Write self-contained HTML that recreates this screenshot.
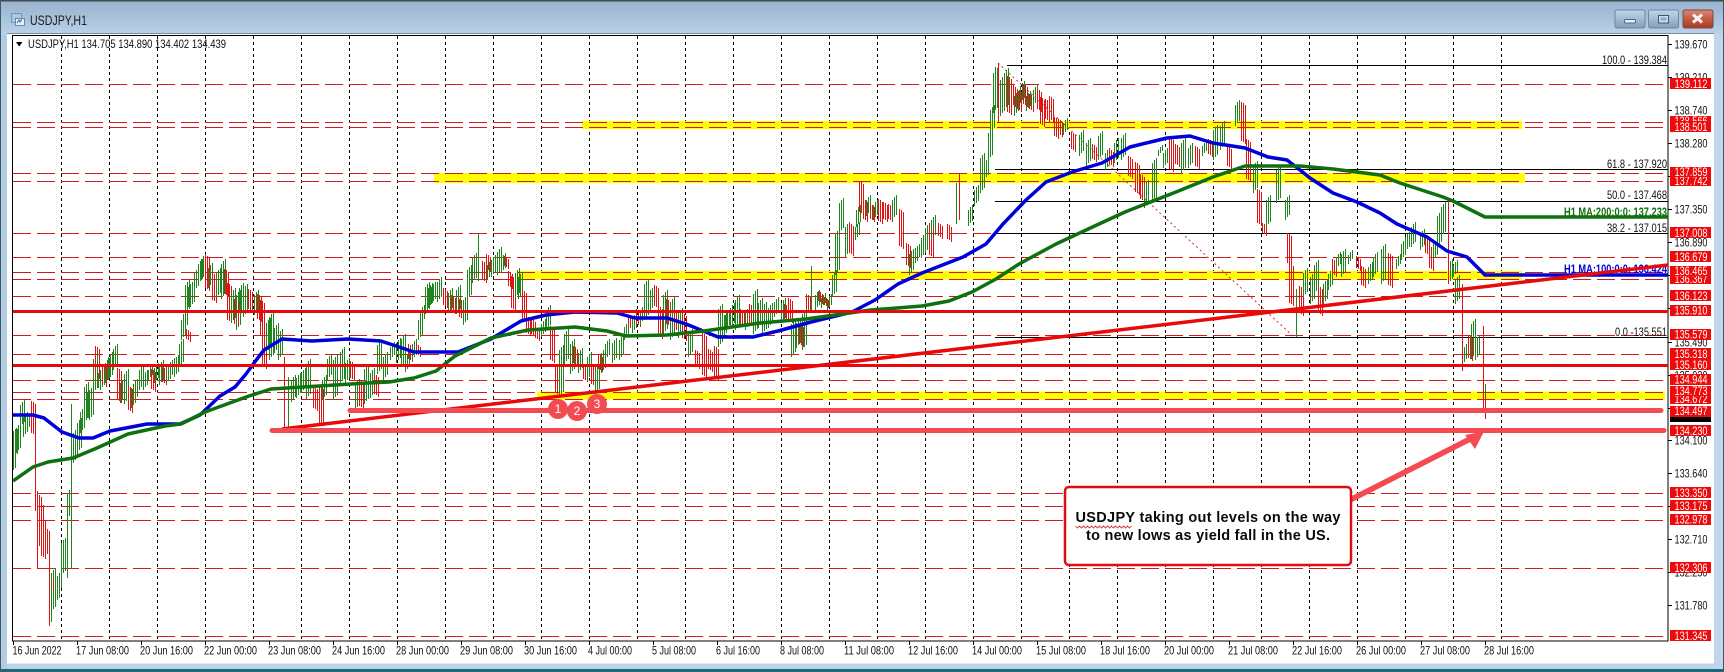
<!DOCTYPE html>
<html><head><meta charset="utf-8"><title>USDJPY,H1</title>
<style>
html,body{margin:0;padding:0;background:#bcd3e9;width:1724px;height:672px;overflow:hidden}
svg{display:block}
text{font-family:"Liberation Sans",sans-serif}
.a{font-size:12px;fill:#111}
.w{font-size:12px;fill:#fff}
.d{font-size:12px;fill:#111}
.f{font-size:12px;fill:#111}
</style></head><body>
<svg width="1724" height="672" viewBox="0 0 1724 672" xmlns="http://www.w3.org/2000/svg">
<defs>
<linearGradient id="tb" x1="0" y1="0" x2="0" y2="1"><stop offset="0" stop-color="#97b0cc"/><stop offset="1" stop-color="#bad2e9"/></linearGradient>
<linearGradient id="btn" x1="0" y1="0" x2="0" y2="1"><stop offset="0" stop-color="#c3d4e6"/><stop offset=".5" stop-color="#a3bbd4"/><stop offset="1" stop-color="#7f9dbd"/></linearGradient>
<linearGradient id="cls" x1="0" y1="0" x2="0" y2="1"><stop offset="0" stop-color="#d98a76"/><stop offset=".5" stop-color="#c55a42"/><stop offset="1" stop-color="#a83a28"/></linearGradient>
<clipPath id="ch"><rect x="13" y="36" width="1655" height="605"/></clipPath>
<path id="gb" stroke="#1e841e" fill="none" d="M13 431v39M15 431v25M18 425v25M22 402v22M25 414v20M29 415v12M53 570v39M57 585v15M59 573v17M63 540v33M65 540v24M69 490v26M75 430v30M79 420v30M82 409v21M86 384v36M89 390v25M91 392v25M95 356v34M100 370v15M102 376v11M107 360v20M110 354v23M115 346v21M122 380v20M126 371v30M133 385v20M135 381v18M141 367v20M145 372v15M150 367v10M156 365v15M161 362v20M168 364v17M172 360v15M176 357v17M181 341v23M183 317v20M185 311v16M187 282v29M190 284v20M192 284v20M196 270v18M200 261v20M203 256v21M210 265v20M218 270v25M223 261v35M233 290v30M238 292v35M241 285v25M245 286v28M256 292v20M268 320v30M271 314v43M276 325v25M280 331v26M293 377v22M298 375v20M303 370v20M308 361v35M324 377v20M329 356v21M335 357v40M342 349v32M347 360v20M357 381v26M366 366v35M372 370v25M379 342v29M385 354v23M392 344v13M398 340v20M403 336v28M407 354v15M414 341v16M420 317v20M422 307v14M427 284v27M430 285v20M433 284v17M439 279v20M450 290v20M458 287v24M465 297v25M469 267v30M474 255v25M489 262v15M493 257v17M499 249v23M503 255v15M517 270v25M520 274v22M543 321v13M548 307v20M561 347v47M566 331v30M572 341v30M580 350v20M589 354v23M597 367v24M603 350v20M607 341v16M614 340v20M621 337v20M626 324v13M634 315v15M642 307v14M646 281v36M650 290v20M665 292v39M672 299v38M680 310v25M690 331v23M720 306v38M724 315v20M727 312v15M732 305v20M737 297v30M747 309v18M755 291v40M760 300v25M764 304v27M770 305v20M776 299v15M783 300v20M793 321v33M798 320v25M804 311v36M817 292v15M823 295v10M829 296v11M834 272v22M837 231v41M841 200v30M847 224v30M857 224v13M858 207v17M868 197v16M875 202v15M894 197v20M911 251v21M915 248v15M919 244v13M923 235v20M927 225v25M933 217v20M970 207v16M976 187v16M982 155v35M986 160v17M990 130v27M992 107v23M995 70v40M1002 77v36M1006 70v37M1016 93v20M1022 83v17M1028 93v15M1035 87v16M1065 120v12M1081 132v21M1088 140v23M1100 133v24M1107 150v17M1116 140v20M1123 135v22M1146 182v23M1154 160v40M1160 147v6M1165 150v15M1183 140v30M1190 145v20M1204 143v10M1215 127v30M1222 123v24M1237 102v21M1255 163v27M1268 197v27M1278 167v33M1287 197v20M1305 270v24M1312 274v27M1316 262v29M1325 281v20M1330 271v16M1338 254v12M1343 251v23M1350 252v9M1370 264v17M1375 254v20M1383 246v35M1398 256v10M1403 241v16M1407 234v15M1413 224v20M1422 231v16M1435 241v16M1439 213v31M1443 204v30M1450 261v20M1455 262v12M1457 277v24M1466 344v15M1473 321v35M1477 337v20"/>
<path id="rb" stroke="#e01212" fill="none" d="M39 495v40M41 503v44M43 519v38M45 529v23M47 529v23M55 580v12M33 402v32M97 347v30M104 365v20M119 369v32M130 387v24M153 370v20M164 368v15M188 330v10M207 256v33M214 274v27M226 270v25M229 284v37M236 300v25M250 290v20M259 295v25M262 301v36M264 337v30M315 387v22M321 387v37M352 362v17M361 381v26M376 375v20M410 345v15M418 345v10M445 289v17M453 296v16M461 300v18M484 262v19M488 255v15M506 257v10M510 272v15M513 277v32M524 291v30M528 317v17M533 320v15M537 329v10M552 327v34M557 367v27M575 347v17M585 365v15M593 365v20M600 355v15M630 318v10M638 310v15M656 286v21M660 307v30M668 300v25M676 310v20M684 314v25M697 351v16M704 334v42M710 350v20M716 347v32M742 310v15M751 305v20M786 305v15M790 299v22M801 325v20M808 295v15M820 292v10M826 298v8M851 224v30M861 182v31M865 200v20M872 205v15M880 200v22M885 203v17M890 205v15M901 210v37M908 244v22M931 224v32M940 224v13M949 225v15M1009 77v36M1013 85v20M1019 90v20M1025 85v20M1031 95v15M1039 90v20M1042 98v27M1047 100v20M1051 97v23M1056 118v19M1060 120v15M1073 133v17M1094 145v15M1111 150v15M1130 157v20M1137 163v30M1142 175v25M1171 138v32M1177 145v20M1197 147v20M1210 140v15M1229 147v20M1243 103v39M1248 140v40M1259 190v34M1264 224v10M1289 234v30M1291 264v40M1301 287v27M1320 287v27M1334 260v15M1358 257v12M1363 267v19M1390 254v32M1431 247v22M1427 237v17M1470 336v23"/>
</defs>
<rect width="1724" height="672" fill="#bcd3e9"/>
<rect width="1724" height="34" fill="url(#tb)"/>
<rect width="1724" height="1.500" fill="#3c4a52"/>
<rect x="0" y="34" width="7" height="635" fill="#b4cbe4"/>
<rect x="7" y="33" width="1707" height="630.500" fill="#fff"/>
<rect x="7" y="33" width="1707" height="1" fill="#7c8a98"/>
<rect x="1714" y="34" width="9" height="635" fill="#c0d6ec"/>
<rect x="1723" y="0" width="1" height="672" fill="#3c5a66"/>
<rect x="0" y="669" width="1724" height="3" fill="#1f6878"/>
<rect x="0" y="0" width="1" height="672" fill="#3c5a66"/>

<!-- title icon -->
<rect x="11.500" y="13.500" width="10" height="9" fill="#a9c8e4" stroke="#6f97bd"/>
<rect x="15.500" y="18.500" width="9" height="7" fill="#e6f0f9" stroke="#5f8db5"/>
<path d="M17 23l2-3 1 2 2-3" fill="none" stroke="#3a6c98"/>
<text x="30" y="25" font-size="13.500" fill="#1c1c1c" textLength="57" lengthAdjust="spacingAndGlyphs">USDJPY,H1</text>

<!-- window buttons -->
<rect x="1615" y="10" width="30" height="18" rx="2" fill="url(#btn)" stroke="#6f88a3"/>
<rect x="1624.500" y="19.500" width="11" height="3.500" rx="1" fill="#e8eef4" stroke="#4f6a86"/>
<rect x="1648.500" y="10" width="30" height="18" rx="2" fill="url(#btn)" stroke="#6f88a3"/>
<rect x="1658.500" y="15.500" width="10" height="7.500" fill="#cfdbe7" stroke="#3f5770"/>
<rect x="1660.500" y="17.500" width="6" height="3" fill="#8fa9c4"/>
<rect x="1683" y="10" width="30" height="18" rx="2" fill="url(#cls)" stroke="#7a4a40"/>
<path d="M1693 14.500l9 8M1702 14.500l-9 8" stroke="#f4f4f4" stroke-width="3"/>

<!-- chart frame -->
<rect x="12.500" y="35.500" width="1655.500" height="605.500" fill="#fff" stroke="#000"/>

<g clip-path="url(#ch)">
<!-- grid -->
<path d="M61.500 36V640M109.500 36V640M157.500 36V640M205.500 36V640M253.500 36V640M301.500 36V640M349.500 36V640M397.500 36V640M445.500 36V640M493.500 36V640M541.500 36V640M589.500 36V640M637.500 36V640M685.500 36V640M733.500 36V640M781.500 36V640M829.500 36V640M877.500 36V640M925.500 36V640M973.500 36V640M1021.500 36V640M1069.500 36V640M1117.500 36V640M1165.500 36V640M1213.500 36V640M1261.500 36V640M1309.500 36V640M1357.500 36V640M1405.500 36V640M1453.500 36V640M1501.500 36V640" stroke="#000" stroke-width="1" stroke-dasharray="3 3" fill="none"/>

<!-- yellow bands -->
<g fill="#ffff00">
<rect x="582" y="121" width="940" height="8"/>
<rect x="434" y="173" width="1091" height="10"/>
<rect x="517" y="271" width="1005" height="8.500"/>
<rect x="537" y="391.500" width="1128" height="8"/>
</g>

<!-- dashed levels -->
<path d="M13 84.500H1664M13 122.500H1664M13 127.500H1664M13 173.500H1664M13 181.500H1664M13 233.500H1664M13 257.500H1664M13 272.500H1664M13 279.500H1664M13 296.500H1664M13 335.500H1664M13 354.500H1664M13 380.500H1664M13 392.500H1664M13 399.500H1664M13 493.500H1664M13 506.500H1664M13 520.500H1664M13 568.500H1664M13 636.500H1664" stroke="#d21a1a" stroke-width="1" stroke-dasharray="18 6" fill="none"/>

<!-- diagonal fib -->
<path d="M998 63L1294 337" stroke="#c43030" stroke-width="1" stroke-dasharray="2 3" fill="none"/>

<!-- fib levels -->
<path d="M1007 65.500H1668M995 169.500H1668M995 201.500H1668M995 233.500H1668M995 337.500H1668" stroke="#000" stroke-width="1" fill="none"/>

<!-- bars -->
<g transform="translate(.5 0)" stroke-width="1">
<use href="#gb"/><use href="#rb"/>
<use href="#rb" x="2" y="2"/><use href="#gb" x="2" y="-2"/>
<use href="#gb" x="-2" y="3"/><use href="#rb" x="-2" y="-1"/>
<path fill="none" stroke="#1e841e" d="M51 582v40M67 498v80M71 404v164M288 377v50M478 234v47M811 266v45M956 183v41M995 67v43M1296 289v48M1485 384v10"/>
<path fill="none" stroke="#e01212" d="M35 424v87M37 491v77M49 540v86M284 357v70M959 173v47M998 63v59M1448 200v84M1462 284v87M1483 326v85M1485 394v25"/>
</g>

<!-- MA -->
<polyline fill="none" stroke="#0000d8" stroke-width="3.500" stroke-linejoin="round" points="13,415 33,415 44,418 62,432 79,438 93,438 110,431 126,428 147,424 180,424 200,415 220,396 235,387 246,374 257,359 264,350 282,339 312,341 348,339 381,341 396,346 414,352 458,352 491,339 521,321 546,315 575,312 617,313 635,318 667,318 686,324 718,337 753,337 778,331 811,322 852,312 875,300 898,284 922,273 963,257 986,244 1003,224 1026,200 1046,182 1072,172 1102,163 1130,147 1167,138 1190,136 1213,143 1245,148 1268,157 1287,160 1300,170 1310,178 1333,193 1357,202 1380,213 1397,224 1427,237 1447,251 1467,257 1485,275 1668,275"/>
<polyline fill="none" stroke="#0e700e" stroke-width="3.500" stroke-linejoin="round" points="13,481 33,467 48,462 73,458 97,448 128,434 165,426 181,424 205,412 249,396 271,389 319,386 367,383 389,382 414,378 436,371 455,356 491,338 528,330 575,327 607,331 626,336 667,335 704,331 760,323 806,319 871,310 922,306 949,301 972,292 996,279 1019,264 1056,244 1099,224 1125,212 1176,192 1213,177 1245,166 1300,166 1333,169 1380,175 1400,183 1443,197 1453,201 1485,217 1668,217"/>

<!-- MA labels -->
<text x="1564" y="216" font-size="12" fill="#0e700e" font-weight="bold" textLength="103" lengthAdjust="spacingAndGlyphs">H1 MA:200:0:0: 137.233</text>
<text x="1564" y="273" font-size="12" fill="#0000d8" font-weight="bold" textLength="103" lengthAdjust="spacingAndGlyphs">H1 MA:100:0:0: 136.424</text>

<!-- solid levels -->
<rect x="13" y="310" width="1655" height="3" fill="#e80a0a"/>
<rect x="13" y="364" width="1655" height="3" fill="#e80a0a"/>
<!-- trend line -->
<path d="M282 429L1668 265" stroke="#e80a0a" stroke-width="3.500" fill="none"/>
<!-- pink levels -->
<path d="M350 410.500H1661M272 430.500H1664" stroke="#f44b52" stroke-width="5" stroke-linecap="round" fill="none"/>
</g>

<!-- circles -->
<g fill="#f44b52"><circle cx="558" cy="409" r="10"/><circle cx="577" cy="411" r="10"/><circle cx="597" cy="404" r="10"/></g>
<g font-size="12" fill="#fff" text-anchor="middle"><text x="558" y="413">1</text><text x="577" y="415">2</text><text x="597" y="408">3</text></g>

<!-- callout arrow -->
<path d="M1350 500L1472 438" stroke="#f44b52" stroke-width="5.500" fill="none"/>
<polygon points="1484,431.500 1465,435 1475,449" fill="#f44b52"/>
<!-- callout -->
<rect x="1065" y="487" width="286" height="78" rx="4" fill="#fff" stroke="#e00c12" stroke-width="2.500"/>
<text x="1075.500" y="522" font-size="14.500" font-weight="bold" fill="#0a0a0a" textLength="265">USDJPY taking out levels on the way</text>
<text x="1086" y="540" font-size="14.500" font-weight="bold" fill="#0a0a0a" textLength="244">to new lows as yield fall in the US.</text>
<path d="M1075.500 526l2 2 2-2 2 2 2-2 2 2 2-2 2 2 2-2 2 2 2-2 2 2 2-2 2 2 2-2 2 2 2-2 2 2 2-2 2 2 2-2 2 2 2-2 2 2 2-2 2 2 2-2 2 2 2-2" fill="none" stroke="#d02020" stroke-width=".8"/>

<!-- header -->
<polygon points="16,42 22.500,42 19.250,46.500" fill="#000"/>
<text x="28" y="48" class="a" textLength="198" lengthAdjust="spacingAndGlyphs">USDJPY,H1  134.705 134.890 134.402 134.439</text>

<!-- fib text -->
<text x="1602" y="64" class="f" textLength="65" lengthAdjust="spacingAndGlyphs">100.0 - 139.384</text>
<text x="1607" y="168" class="f" textLength="60" lengthAdjust="spacingAndGlyphs">61.8 - 137.920</text>
<text x="1607" y="199" class="f" textLength="60" lengthAdjust="spacingAndGlyphs">50.0 - 137.468</text>
<text x="1607" y="232" class="f" textLength="60" lengthAdjust="spacingAndGlyphs">38.2 - 137.015</text>
<text x="1615" y="336" class="f" textLength="52" lengthAdjust="spacingAndGlyphs">0.0 -135.551</text>

<!-- price ticks -->
<path d="M1668 44.500h4M1668 77.500h4M1668 110.500h4M1668 143.500h4M1668 176.500h4M1668 209.500h4M1668 242.500h4M1668 275.500h4M1668 308.500h4M1668 342.500h4M1668 375.500h4M1668 408.500h4M1668 440.500h4M1668 473.500h4M1668 506.500h4M1668 539.500h4M1668 572.500h4M1668 605.500h4" stroke="#000" fill="none"/>

<!-- price axis -->
<text x="1674.500" y="48.500" class="a" textLength="33" lengthAdjust="spacingAndGlyphs">139.670</text>
<text x="1674.500" y="81.500" class="a" textLength="33" lengthAdjust="spacingAndGlyphs">139.210</text>
<text x="1674.500" y="114.500" class="a" textLength="33" lengthAdjust="spacingAndGlyphs">138.740</text>
<text x="1674.500" y="147.500" class="a" textLength="33" lengthAdjust="spacingAndGlyphs">138.280</text>
<text x="1674.500" y="213.500" class="a" textLength="33" lengthAdjust="spacingAndGlyphs">137.350</text>
<text x="1674.500" y="246.500" class="a" textLength="33" lengthAdjust="spacingAndGlyphs">136.890</text>
<text x="1674.500" y="346.500" class="a" textLength="33" lengthAdjust="spacingAndGlyphs">135.490</text>
<text x="1674.500" y="379.500" class="a" textLength="33" lengthAdjust="spacingAndGlyphs">135.030</text>
<text x="1674.500" y="444.500" class="a" textLength="33" lengthAdjust="spacingAndGlyphs">134.100</text>
<text x="1674.500" y="477.500" class="a" textLength="33" lengthAdjust="spacingAndGlyphs">133.640</text>
<text x="1674.500" y="543.500" class="a" textLength="33" lengthAdjust="spacingAndGlyphs">132.710</text>
<text x="1674.500" y="576.500" class="a" textLength="33" lengthAdjust="spacingAndGlyphs">132.250</text>
<text x="1674.500" y="609.500" class="a" textLength="33" lengthAdjust="spacingAndGlyphs">131.780</text>

<!-- red price labels -->
<rect x="1670" y="78" width="41" height="11" fill="#ee0a0a"/><text x="1674.500" y="88" class="w" textLength="33" lengthAdjust="spacingAndGlyphs">139.112</text>
<rect x="1670" y="116" width="41" height="11" fill="#ee0a0a"/><text x="1674.500" y="125" class="w" textLength="33" lengthAdjust="spacingAndGlyphs">138.566</text>
<rect x="1670" y="121" width="41" height="11" fill="#ee0a0a"/><text x="1674.500" y="131" class="w" textLength="33" lengthAdjust="spacingAndGlyphs">138.501</text>
<rect x="1670" y="175" width="41" height="11" fill="#ee0a0a"/><text x="1674.500" y="185" class="w" textLength="33" lengthAdjust="spacingAndGlyphs">137.742</text>
<rect x="1670" y="167" width="41" height="10" fill="#ee0a0a"/><text x="1674.500" y="176" class="w" textLength="33" lengthAdjust="spacingAndGlyphs">137.859</text>
<rect x="1670" y="227" width="41" height="11" fill="#ee0a0a"/><text x="1674.500" y="237" class="w" textLength="33" lengthAdjust="spacingAndGlyphs">137.008</text>
<rect x="1670" y="251" width="41" height="11" fill="#ee0a0a"/><text x="1674.500" y="261" class="w" textLength="33" lengthAdjust="spacingAndGlyphs">136.679</text>
<rect x="1670" y="273" width="41" height="11" fill="#ee0a0a"/><text x="1674.500" y="283" class="w" textLength="33" lengthAdjust="spacingAndGlyphs">136.367</text>
<rect x="1670" y="266" width="41" height="10" fill="#ee0a0a"/><text x="1674.500" y="275" class="w" textLength="33" lengthAdjust="spacingAndGlyphs">136.465</text>
<rect x="1670" y="290" width="41" height="11" fill="#ee0a0a"/><text x="1674.500" y="300" class="w" textLength="33" lengthAdjust="spacingAndGlyphs">136.123</text>
<rect x="1670" y="305" width="41" height="11" fill="#ee0a0a"/><text x="1674.500" y="314.500" class="w" textLength="33" lengthAdjust="spacingAndGlyphs">135.910</text>
<rect x="1670" y="329" width="41" height="11" fill="#ee0a0a"/><text x="1674.500" y="338.500" class="w" textLength="33" lengthAdjust="spacingAndGlyphs">135.579</text>
<rect x="1670" y="348" width="41" height="11" fill="#ee0a0a"/><text x="1674.500" y="358" class="w" textLength="33" lengthAdjust="spacingAndGlyphs">135.318</text>
<rect x="1670" y="359" width="41" height="11" fill="#ee0a0a"/><text x="1674.500" y="369" class="w" textLength="33" lengthAdjust="spacingAndGlyphs">135.160</text>
<rect x="1670" y="374" width="41" height="11" fill="#ee0a0a"/><text x="1674.500" y="383.500" class="w" textLength="33" lengthAdjust="spacingAndGlyphs">134.944</text>
<rect x="1670" y="393" width="41" height="11" fill="#ee0a0a"/><text x="1674.500" y="403" class="w" textLength="33" lengthAdjust="spacingAndGlyphs">134.672</text>
<rect x="1670" y="386" width="41" height="10" fill="#ee0a0a"/><text x="1674.500" y="395" class="w" textLength="33" lengthAdjust="spacingAndGlyphs">134.773</text>
<rect x="1670" y="416" width="41" height="6" fill="#000"/>
<rect x="1670" y="406" width="41" height="11" fill="#ee0a0a"/><text x="1674.500" y="415" class="w" textLength="33" lengthAdjust="spacingAndGlyphs">134.497</text>
<rect x="1670" y="425" width="41" height="11" fill="#ee0a0a"/><text x="1674.500" y="435" class="w" textLength="33" lengthAdjust="spacingAndGlyphs">134.230</text>
<rect x="1670" y="487" width="41" height="11" fill="#ee0a0a"/><text x="1674.500" y="497" class="w" textLength="33" lengthAdjust="spacingAndGlyphs">133.350</text>
<rect x="1670" y="500" width="41" height="11" fill="#ee0a0a"/><text x="1674.500" y="510" class="w" textLength="33" lengthAdjust="spacingAndGlyphs">133.175</text>
<rect x="1670" y="514" width="41" height="11" fill="#ee0a0a"/><text x="1674.500" y="523.500" class="w" textLength="33" lengthAdjust="spacingAndGlyphs">132.978</text>
<rect x="1670" y="562" width="41" height="11" fill="#ee0a0a"/><text x="1674.500" y="572" class="w" textLength="33" lengthAdjust="spacingAndGlyphs">132.306</text>
<rect x="1670" y="630" width="41" height="11" fill="#ee0a0a"/><text x="1674.500" y="640" class="w" textLength="33" lengthAdjust="spacingAndGlyphs">131.345</text>

<!-- time ticks -->
<path d="M13.500 641v4M77.500 641v4M141.500 641v4M205.500 641v4M269.500 641v4M333.500 641v4M397.500 641v4M461.500 641v4M525.500 641v4M589.500 641v4M653.500 641v4M717.500 641v4M781.500 641v4M845.500 641v4M909.500 641v4M973.500 641v4M1037.500 641v4M1101.500 641v4M1165.500 641v4M1229.500 641v4M1293.500 641v4M1357.500 641v4M1421.500 641v4M1485.500 641v4" stroke="#000" fill="none"/>

<!-- time labels -->
<text x="12.500" y="654.500" class="d" textLength="49" lengthAdjust="spacingAndGlyphs">16 Jun 2022</text>
<text x="76" y="654.500" class="d" textLength="53" lengthAdjust="spacingAndGlyphs">17 Jun 08:00</text>
<text x="140" y="654.500" class="d" textLength="53" lengthAdjust="spacingAndGlyphs">20 Jun 16:00</text>
<text x="204" y="654.500" class="d" textLength="53" lengthAdjust="spacingAndGlyphs">22 Jun 00:00</text>
<text x="268" y="654.500" class="d" textLength="53" lengthAdjust="spacingAndGlyphs">23 Jun 08:00</text>
<text x="332" y="654.500" class="d" textLength="53" lengthAdjust="spacingAndGlyphs">24 Jun 16:00</text>
<text x="396" y="654.500" class="d" textLength="53" lengthAdjust="spacingAndGlyphs">28 Jun 00:00</text>
<text x="460" y="654.500" class="d" textLength="53" lengthAdjust="spacingAndGlyphs">29 Jun 08:00</text>
<text x="524" y="654.500" class="d" textLength="53" lengthAdjust="spacingAndGlyphs">30 Jun 16:00</text>
<text x="588" y="654.500" class="d" textLength="44" lengthAdjust="spacingAndGlyphs">4 Jul 00:00</text>
<text x="652" y="654.500" class="d" textLength="44" lengthAdjust="spacingAndGlyphs">5 Jul 08:00</text>
<text x="716" y="654.500" class="d" textLength="44" lengthAdjust="spacingAndGlyphs">6 Jul 16:00</text>
<text x="780" y="654.500" class="d" textLength="44" lengthAdjust="spacingAndGlyphs">8 Jul 08:00</text>
<text x="844" y="654.500" class="d" textLength="50" lengthAdjust="spacingAndGlyphs">11 Jul 08:00</text>
<text x="908" y="654.500" class="d" textLength="50" lengthAdjust="spacingAndGlyphs">12 Jul 16:00</text>
<text x="972" y="654.500" class="d" textLength="50" lengthAdjust="spacingAndGlyphs">14 Jul 00:00</text>
<text x="1036" y="654.500" class="d" textLength="50" lengthAdjust="spacingAndGlyphs">15 Jul 08:00</text>
<text x="1100" y="654.500" class="d" textLength="50" lengthAdjust="spacingAndGlyphs">18 Jul 16:00</text>
<text x="1164" y="654.500" class="d" textLength="50" lengthAdjust="spacingAndGlyphs">20 Jul 00:00</text>
<text x="1228" y="654.500" class="d" textLength="50" lengthAdjust="spacingAndGlyphs">21 Jul 08:00</text>
<text x="1292" y="654.500" class="d" textLength="50" lengthAdjust="spacingAndGlyphs">22 Jul 16:00</text>
<text x="1356" y="654.500" class="d" textLength="50" lengthAdjust="spacingAndGlyphs">26 Jul 00:00</text>
<text x="1420" y="654.500" class="d" textLength="50" lengthAdjust="spacingAndGlyphs">27 Jul 08:00</text>
<text x="1484" y="654.500" class="d" textLength="50" lengthAdjust="spacingAndGlyphs">28 Jul 16:00</text>
</svg>
</body></html>
